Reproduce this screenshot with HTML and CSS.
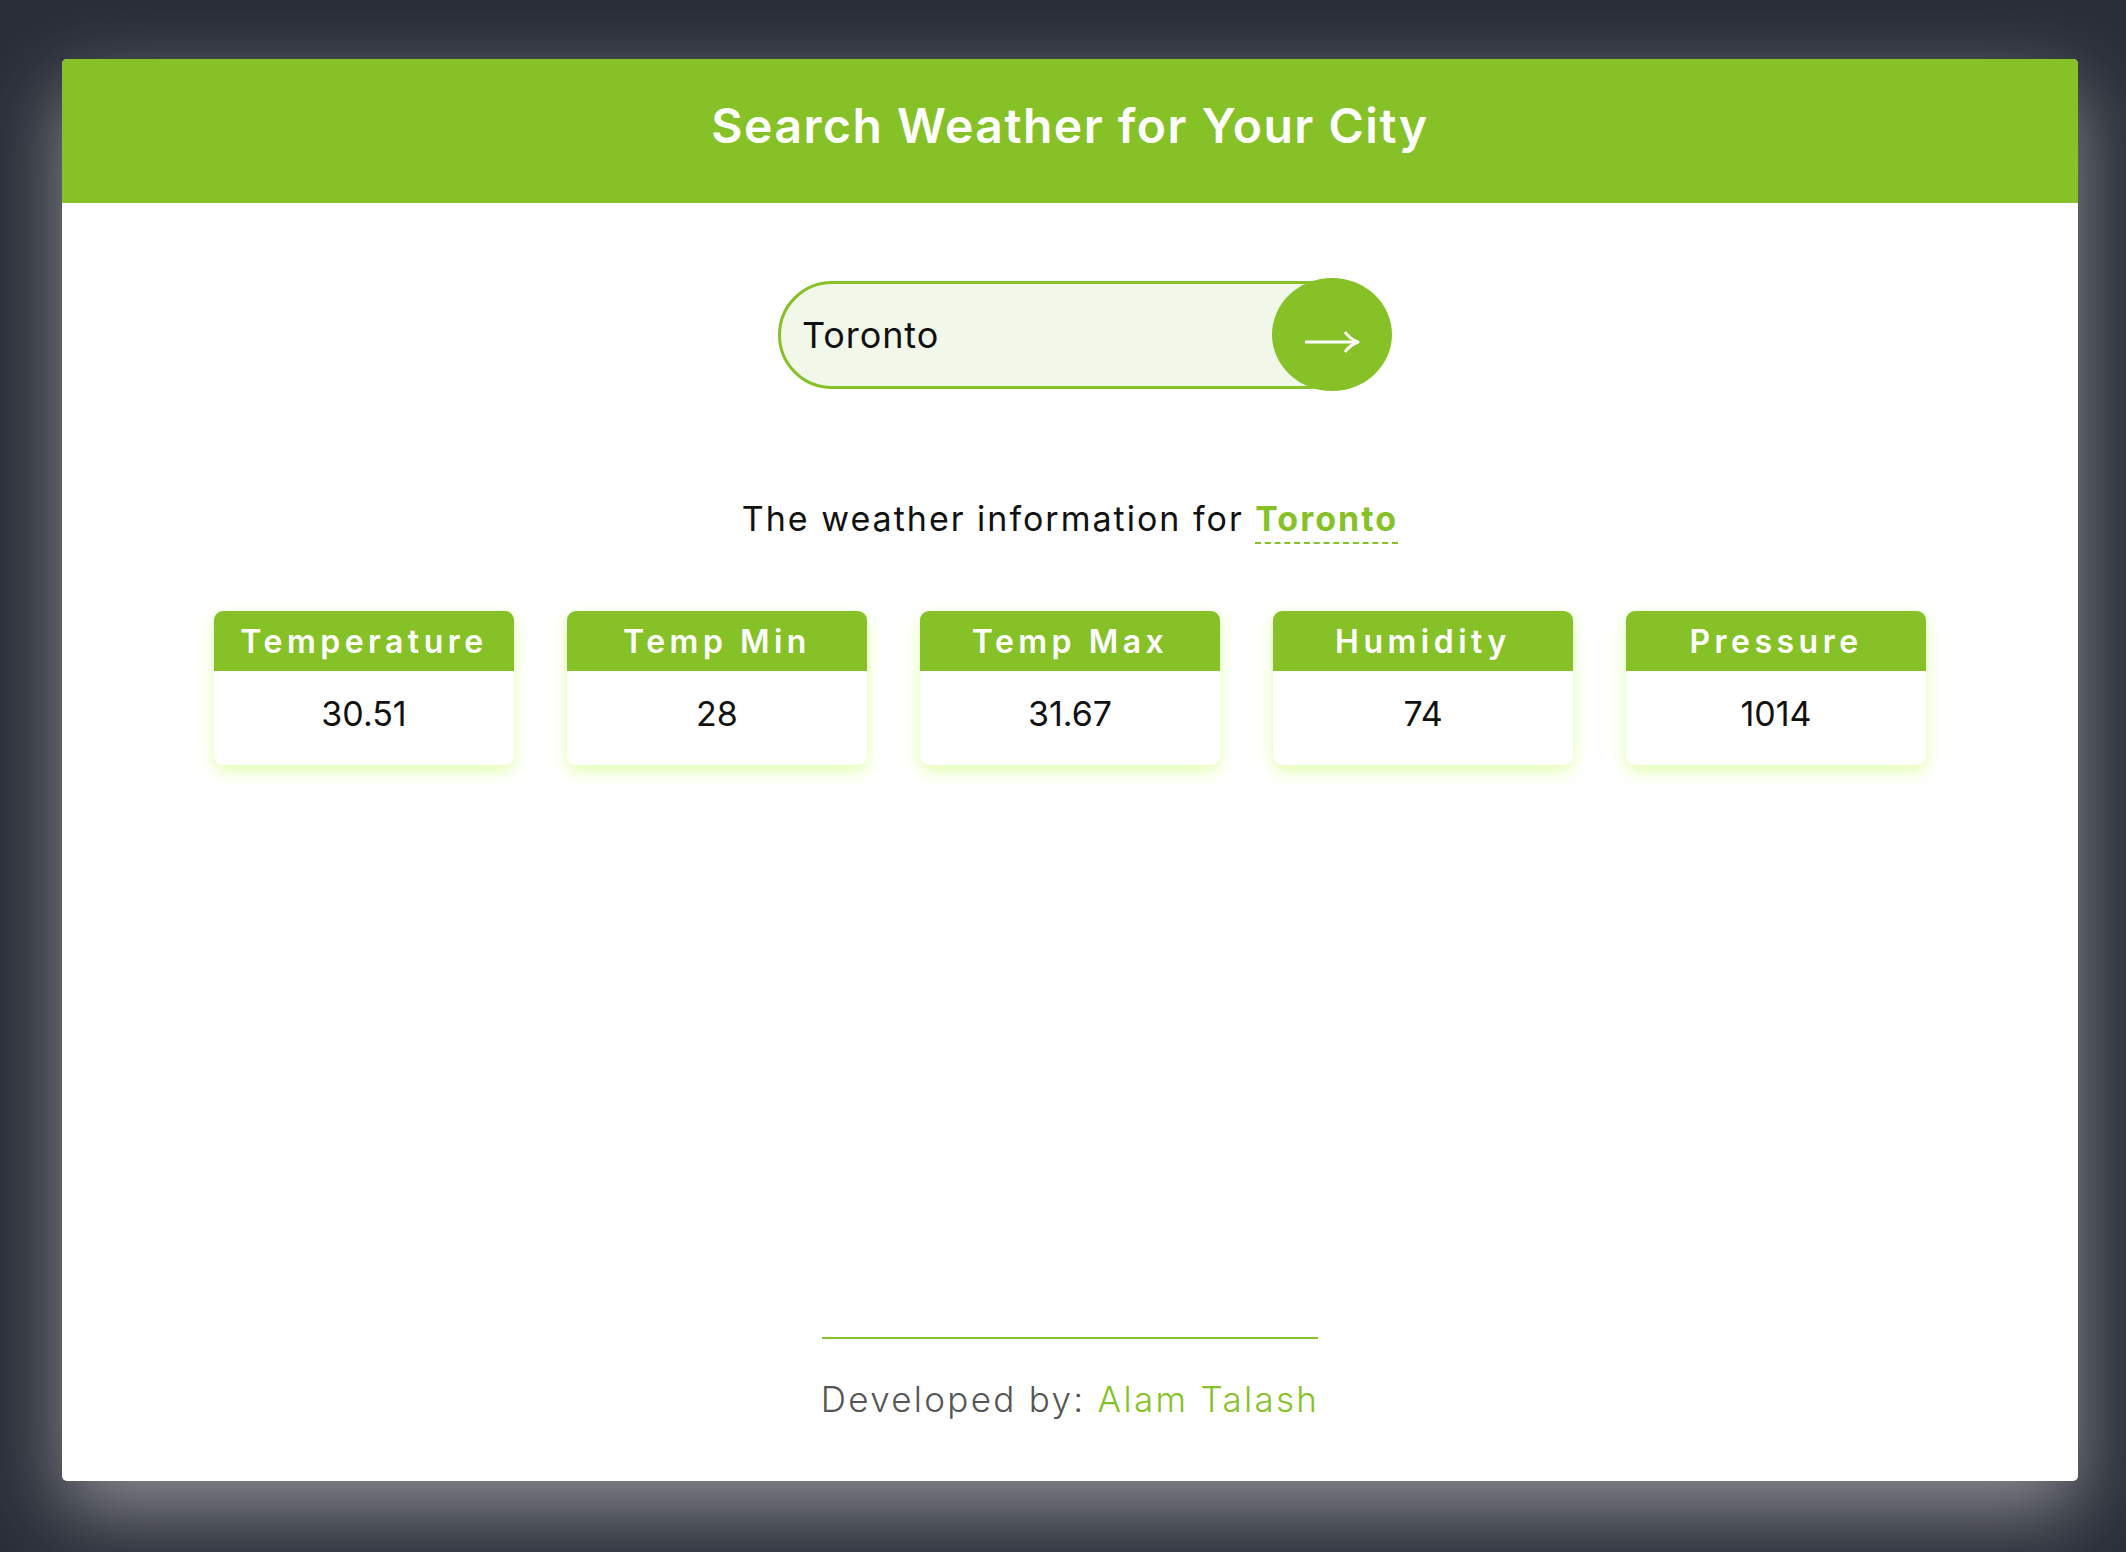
FILE: index.html
```html
<!DOCTYPE html>
<html lang="en">
<head>
<meta charset="utf-8">
<title>Weather</title>
<link rel="stylesheet" href="styles.css">
</head>
<body>
<div class="app">
  <header class="app-header">
    <h1 class="title">Search Weather for Your City</h1>
  </header>
  <main class="content">
    <form class="search" onsubmit="return false">
      <input class="search-input" type="text" value="Toronto">
      <button class="search-btn" type="submit" aria-label="Search">
        <svg width="56" height="24" viewBox="0 0 56 24">
          <path d="M1 12 H53" stroke="#fff" stroke-width="3" fill="none"/>
          <path d="M41 2 Q46 9 54 12 Q46 15 41 22" stroke="#fff" stroke-width="3" fill="none" stroke-linejoin="round"/>
        </svg>
      </button>
    </form>
    <p class="info">The weather information for <span class="city">Toronto</span></p>
    <div class="cards">
      <div class="card"><div class="card-head">Temperature</div><div class="card-body">30.51</div></div>
      <div class="card"><div class="card-head">Temp Min</div><div class="card-body">28</div></div>
      <div class="card"><div class="card-head">Temp Max</div><div class="card-body">31.67</div></div>
      <div class="card"><div class="card-head">Humidity</div><div class="card-body">74</div></div>
      <div class="card"><div class="card-head">Pressure</div><div class="card-body">1014</div></div>
    </div>
  </main>
  <footer class="footer">
    <div class="footer-line"></div>
    <p class="credit">Developed by: <span class="author">Alam Talash</span></p>
  </footer>
</div>
</body>
</html>
```
FILE: styles.css
```css
html, body {
  margin: 0;
  padding: 0;
}
body {
  background: #2a2e38;
  font-family: "Inter", "Liberation Sans", sans-serif;
  min-height: 1552px;
  padding: 59px 48px 71px 62px;
  box-sizing: border-box;
}
.app {
  width: 2016px;
  height: 1422px;
  background: #ffffff;
  border-radius: 5px;
  box-shadow: 0 30px 80px rgba(255, 255, 255, 0.46);
  display: flex;
  flex-direction: column;
  overflow: hidden;
}
.app-header {
  height: 144px;
  background: #86c227;
  display: flex;
  align-items: center;
  justify-content: center;
}
.title {
  margin: 0;
  color: #fff;
  font-size: 48px;
  font-weight: 600;
  letter-spacing: 1.5px;
  line-height: 1;
  padding-bottom: 11px;
}
.content {
  display: flex;
  flex-direction: column;
  align-items: center;
  flex: 1;
}
.search {
  position: relative;
  width: 584px;
  height: 108px;
  margin-top: 78px;
}
.search-input {
  box-sizing: border-box;
  width: 100%;
  height: 108px;
  border: 3px solid #86c227;
  border-radius: 54px;
  background: #f1f7e9;
  padding: 0 0 0 21px;
  font-family: inherit;
  font-size: 36px;
  letter-spacing: 0.9px;
  color: #111;
  outline: none;
}
.search-btn {
  position: absolute;
  right: -30px;
  top: -3px;
  width: 120px;
  height: 113px;
  border: none;
  border-radius: 50%;
  background: #86c227;
  display: flex;
  align-items: center;
  justify-content: center;
  padding: 14px 0 0 0;
  cursor: pointer;
}
.info {
  margin: 110px 0 0 0;
  font-size: 34px;
  line-height: 40px;
  color: #111;
  letter-spacing: 2px;
}
.city {
  color: #86c227;
  font-weight: 700;
  border-bottom: 2px dashed #86c227;
  padding-bottom: 3px;
}
.cards {
  display: flex;
  gap: 53px;
  margin-top: 72px;
}
.card {
  width: 300px;
  border-radius: 9px;
  background: #fff;
  overflow: hidden;
  box-shadow: 0 6px 16px rgba(214, 255, 140, 0.7);
}
.card-head {
  height: 60px;
  background: #86c227;
  color: #fff;
  font-size: 32px;
  font-weight: 600;
  letter-spacing: 4.5px;
  display: flex;
  align-items: center;
  justify-content: center;
}
.card-body {
  height: 94px;
  display: flex;
  align-items: center;
  justify-content: center;
  font-size: 34px;
  color: #111;
  padding-bottom: 10px;
  box-sizing: border-box;
}
.footer {
  display: flex;
  flex-direction: column;
  align-items: center;
  padding-bottom: 60px;
}
.footer-line {
  width: 496px;
  height: 2px;
  background: #86c227;
}
.credit {
  margin: 38px 0 0 0;
  font-size: 35px;
  line-height: 44px;
  color: #555;
  font-weight: 300;
  letter-spacing: 2.3px;
}
.author {
  color: #86c227;
}
```
